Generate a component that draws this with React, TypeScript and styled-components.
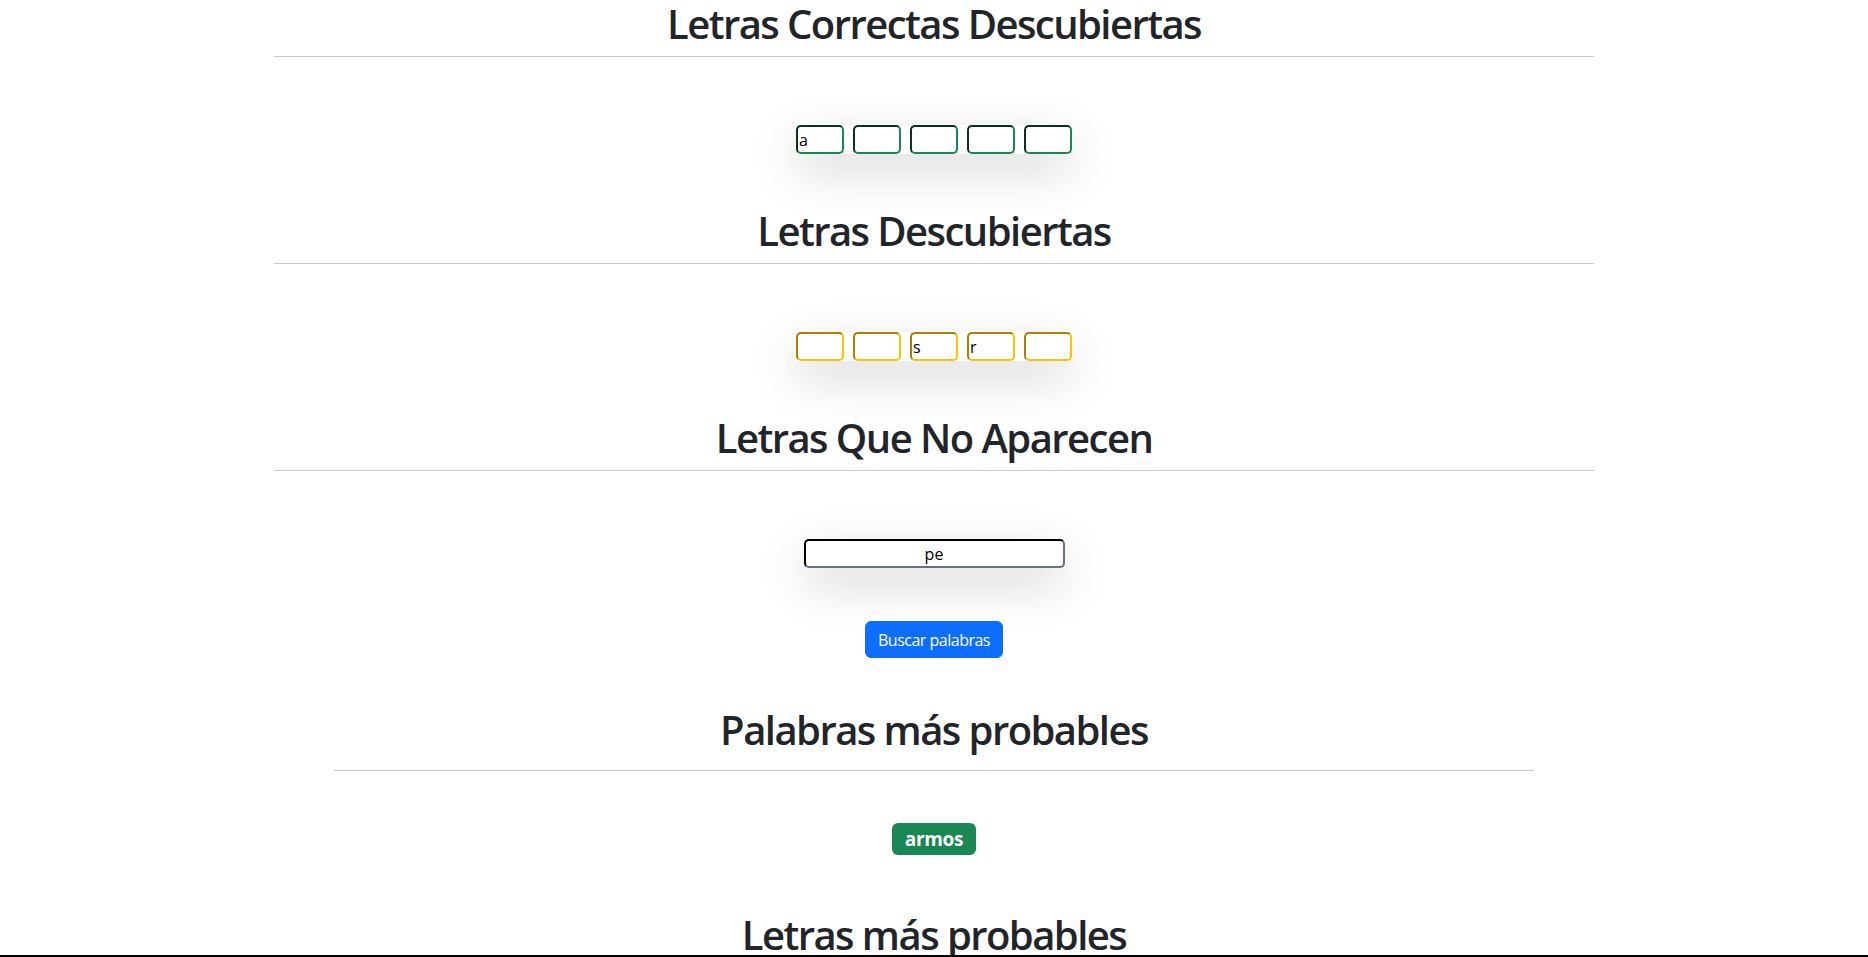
import React from "react";
import styled, { createGlobalStyle } from "styled-components";

const GlobalStyle = createGlobalStyle`
  html, body {
    margin: 0;
    padding: 0;
    background: #ffffff;
  }
  body {
    font-family: "Open Sans", "Noto Sans", "Liberation Sans", sans-serif;
    font-size: 16px;
    color: #212529;
  }
`;

const Page = styled.main`
  display: flex;
  flex-direction: column;
  align-items: center;
  width: 100%;
`;

const Section = styled.section<{ $top?: number }>`
  display: flex;
  flex-direction: column;
  align-items: center;
  width: 100%;
  margin-top: ${(p) => p.$top ?? 0}px;
`;

const Title = styled.h1`
  margin: 0;
  width: 100%;
  text-align: center;
  font-size: 40px;
  font-weight: 600;
  letter-spacing: -1.55px;
  line-height: 48px;
  color: #212529;
  white-space: nowrap;
`;

const Rule = styled.hr<{ $width: number; $gap: number }>`
  width: ${(p) => p.$width}px;
  margin: ${(p) => p.$gap}px 0 0;
  border: 0;
  border-top: 1px solid #c9cacb;
  height: 0;
`;

const LetterRow = styled.div`
  display: flex;
  gap: 9px;
  margin-top: 68px;
  box-shadow: 0 16px 48px rgba(0, 0, 0, 0.175);
`;

const LetterBox = styled.input<{ $tone: string }>`
  box-sizing: border-box;
  width: 48px;
  height: 29px;
  padding: 0 1px;
  border: 2px inset ${(p) => p.$tone};
  border-radius: 5px;
  background: #ffffff;
  font-family: "Open Sans", "Noto Sans", sans-serif;
  font-size: 16px;
  color: #000000;
  outline: none;
`;

const ExcludedInput = styled.input`
  box-sizing: border-box;
  width: 261px;
  height: 29px;
  margin-top: 68px;
  padding: 0 2px;
  border: 2px inset #212529;
  border-radius: 5px;
  background: #ffffff;
  text-align: center;
  font-family: "Open Sans", "Noto Sans", sans-serif;
  font-size: 16px;
  color: #000000;
  box-shadow: 0 16px 48px rgba(0, 0, 0, 0.175);
  outline: none;
`;

const SearchButton = styled.button`
  margin-top: 53px;
  height: 37px;
  padding: 0 12px;
  border: 1px solid #0d6efd;
  border-radius: 6px;
  background: #0d6efd;
  color: #ffffff;
  font-family: "Open Sans", "Noto Sans", sans-serif;
  font-size: 16px;
  letter-spacing: -0.5px;
  line-height: 24px;
  cursor: pointer;
`;

const WordBadge = styled.span`
  display: inline-block;
  margin-top: 52px;
  padding: 6px 13px;
  border-radius: 6px;
  background: #198754;
  color: #ffffff;
  font-size: 19px;
  font-weight: 700;
  letter-spacing: -0.3px;
  line-height: 20px;
`;

const BottomEdge = styled.div`
  position: fixed;
  left: 0;
  right: 0;
  bottom: 0;
  height: 2px;
  background: #000000;
`;

const correct = ["a", "", "", "", ""];
const found = ["", "", "s", "r", ""];

export default function App() {
  return (
    <>
      <GlobalStyle />
      <Page>
        <Section>
          <Title>Letras Correctas Descubiertas</Title>
          <Rule $width={1320} $gap={8} />
          <LetterRow>
            {correct.map((l, i) => (
              <LetterBox key={i} $tone="#198754" defaultValue={l} maxLength={1} />
            ))}
          </LetterRow>
        </Section>

        <Section $top={53}>
          <Title>Letras Descubiertas</Title>
          <Rule $width={1320} $gap={8} />
          <LetterRow>
            {found.map((l, i) => (
              <LetterBox key={i} $tone="#ffc107" defaultValue={l} maxLength={1} />
            ))}
          </LetterRow>
        </Section>

        <Section $top={53}>
          <Title>Letras Que No Aparecen</Title>
          <Rule $width={1320} $gap={8} />
          <ExcludedInput defaultValue="pe" />
          <SearchButton type="button">Buscar palabras</SearchButton>
        </Section>

        <Section $top={48}>
          <Title>Palabras más probables</Title>
          <Rule $width={1200} $gap={16} />
          <WordBadge>armos</WordBadge>
        </Section>

        <Section $top={56}>
          <Title>Letras más probables</Title>
        </Section>
      </Page>
      <BottomEdge />
    </>
  );
}
